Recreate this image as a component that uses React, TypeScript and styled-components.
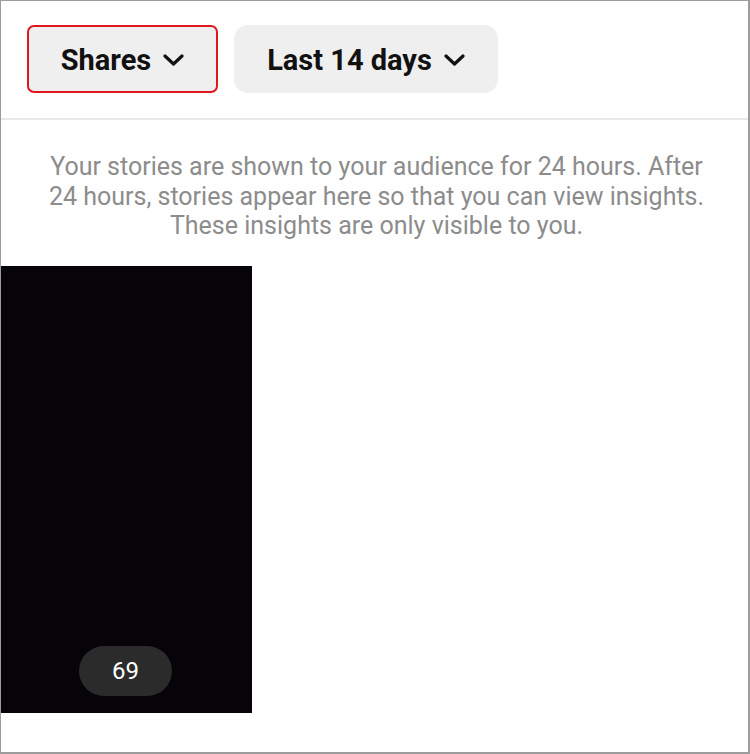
import React from 'react';
import styled, { createGlobalStyle } from 'styled-components';

const GlobalStyle = createGlobalStyle`
  html, body {
    margin: 0;
    padding: 0;
    background: #ffffff;
  }
  * {
    box-sizing: border-box;
  }
`;

const Frame = styled.div`
  width: 750px;
  height: 754px;
  border: 1px solid #9c9c9c;
  border-right-width: 2px;
  border-bottom-width: 2px;
  background: #ffffff;
  font-family: Roboto, 'Noto Sans', sans-serif;
  overflow: hidden;
`;

const FilterBar = styled.div`
  display: flex;
  align-items: center;
  gap: 16px;
  height: 119px;
  padding: 0 0 2px 26px;
  border-bottom: 2px solid #e8e8e8;
`;

const FilterButton = styled.button<{ $active?: boolean; $width: number }>`
  display: flex;
  align-items: center;
  justify-content: center;
  gap: 12px;
  width: ${({ $width }) => $width}px;
  height: 68px;
  padding: 2px 0 0;
  border: ${({ $active }) => ($active ? '2px solid #e0161e' : '2px solid transparent')};
  border-radius: ${({ $active }) => ($active ? '7px' : '14px')};
  background: #efefef;
  color: #111111;
  font-family: Roboto, 'Noto Sans', sans-serif;
  font-size: 29px;
  font-weight: 700;
  cursor: pointer;
`;

const Chevron = () => (
  <svg width="21" height="12" viewBox="0 0 21 12" fill="none">
    <path d="M2 2 L10.5 10 L19 2" stroke="#111" strokeWidth="3.2" strokeLinecap="round" strokeLinejoin="round" />
  </svg>
);

const Notice = styled.p`
  margin: 0;
  padding: 32px 8px 0 12px;
  text-align: center;
  color: #8c8c8c;
  font-size: 25px;
  line-height: 29.5px;
`;

const Grid = styled.div`
  display: grid;
  grid-template-columns: repeat(3, 251px);
  margin-top: 25px;
`;

const StoryTile = styled.div`
  position: relative;
  height: 447px;
  background: #060409;
`;

const CountPill = styled.div`
  position: absolute;
  left: 78px;
  bottom: 17px;
  width: 93px;
  height: 50px;
  border-radius: 25px;
  background: #2b2b2b;
  color: #ffffff;
  display: flex;
  align-items: center;
  justify-content: center;
  font-size: 24px;
`;

const App = () => {
  return (
    <>
      <GlobalStyle />
      <Frame>
        <FilterBar>
          <FilterButton $active $width={191}>
            Shares <Chevron />
          </FilterButton>
          <FilterButton $width={264}>
            Last 14 days <Chevron />
          </FilterButton>
        </FilterBar>
        <Notice>
          Your stories are shown to your audience for 24 hours. After
          <br />
          24 hours, stories appear here so that you can view insights.
          <br />
          These insights are only visible to you.
        </Notice>
        <Grid>
          <StoryTile>
            <CountPill>69</CountPill>
          </StoryTile>
        </Grid>
      </Frame>
    </>
  );
};

export default App;
